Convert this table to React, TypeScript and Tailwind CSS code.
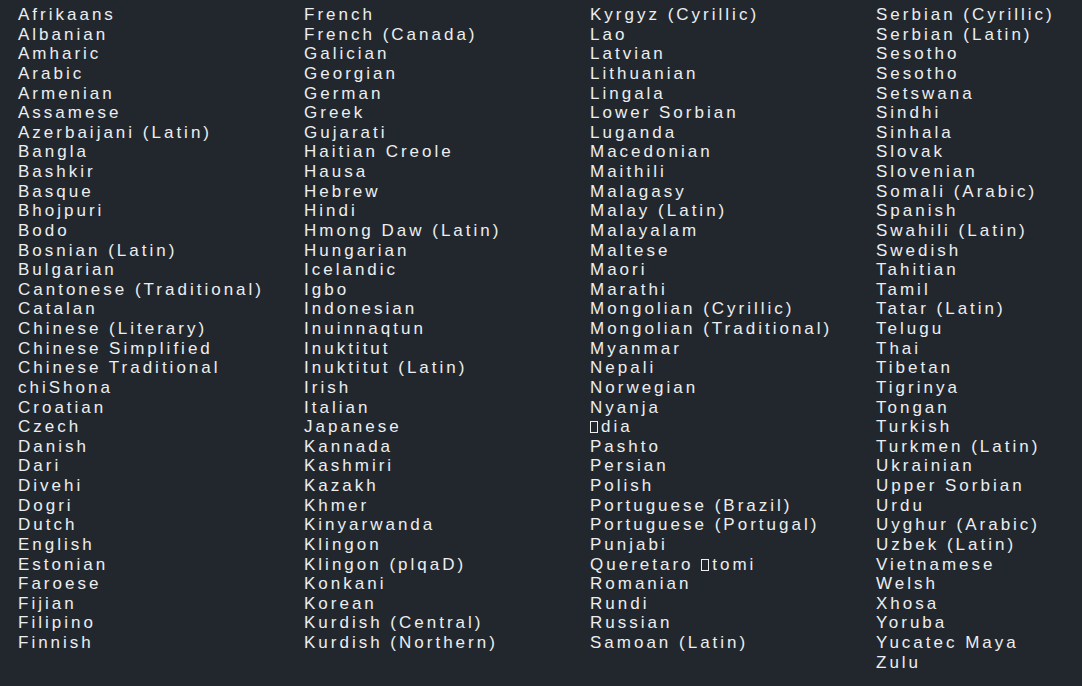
const columns: string[][] = [
  [
    'Afrikaans', 'Albanian', 'Amharic', 'Arabic', 'Armenian', 'Assamese', 'Azerbaijani (Latin)',
    'Bangla', 'Bashkir', 'Basque', 'Bhojpuri', 'Bodo', 'Bosnian (Latin)', 'Bulgarian',
    'Cantonese (Traditional)', 'Catalan', 'Chinese (Literary)', 'Chinese Simplified',
    'Chinese Traditional', 'chiShona', 'Croatian', 'Czech', 'Danish', 'Dari', 'Divehi', 'Dogri',
    'Dutch', 'English', 'Estonian', 'Faroese', 'Fijian', 'Filipino', 'Finnish',
  ],
  [
    'French', 'French (Canada)', 'Galician', 'Georgian', 'German', 'Greek', 'Gujarati',
    'Haitian Creole', 'Hausa', 'Hebrew', 'Hindi', 'Hmong Daw (Latin)', 'Hungarian', 'Icelandic',
    'Igbo', 'Indonesian', 'Inuinnaqtun', 'Inuktitut', 'Inuktitut (Latin)', 'Irish', 'Italian',
    'Japanese', 'Kannada', 'Kashmiri', 'Kazakh', 'Khmer', 'Kinyarwanda', 'Klingon',
    'Klingon (plqaD)', 'Konkani', 'Korean', 'Kurdish (Central)', 'Kurdish (Northern)',
  ],
  [
    'Kyrgyz (Cyrillic)', 'Lao', 'Latvian', 'Lithuanian', 'Lingala', 'Lower Sorbian', 'Luganda',
    'Macedonian', 'Maithili', 'Malagasy', 'Malay (Latin)', 'Malayalam', 'Maltese', 'Maori',
    'Marathi', 'Mongolian (Cyrillic)', 'Mongolian (Traditional)', 'Myanmar', 'Nepali',
    'Norwegian', 'Nyanja', '#dia', 'Pashto', 'Persian', 'Polish', 'Portuguese (Brazil)',
    'Portuguese (Portugal)', 'Punjabi', 'Queretaro #tomi', 'Romanian', 'Rundi', 'Russian',
    'Samoan (Latin)',
  ],
  [
    'Serbian (Cyrillic)', 'Serbian (Latin)', 'Sesotho', 'Sesotho', 'Setswana', 'Sindhi', 'Sinhala',
    'Slovak', 'Slovenian', 'Somali (Arabic)', 'Spanish', 'Swahili (Latin)', 'Swedish', 'Tahitian',
    'Tamil', 'Tatar (Latin)', 'Telugu', 'Thai', 'Tibetan', 'Tigrinya', 'Tongan', 'Turkish',
    'Turkmen (Latin)', 'Ukrainian', 'Upper Sorbian', 'Urdu', 'Uyghur (Arabic)', 'Uzbek (Latin)',
    'Vietnamese', 'Welsh', 'Xhosa', 'Yoruba', 'Yucatec Maya', 'Zulu',
  ],
];

// missing-glyph box, as the reference font draws it
function Tofu() {
  return <span className="inline-block w-[8px] h-[12px] border border-current align-[-1px] mr-[3px]" />;
}

function Name({ text }: { text: string }) {
  const parts = text.split('#');
  if (parts.length === 1) return <>{text}</>;
  return (
    <>
      {parts[0]}
      <Tofu />
      {parts[1]}
    </>
  );
}

export default function App() {
  return (
    <div className="w-[1082px] h-[686px] overflow-hidden bg-[#22272e] text-[#eceef0] font-['Liberation_Sans',sans-serif] text-[17px] leading-[19.625px] tracking-[3px]">
      {/* four flowed columns */}
      <div className="flex pt-[5px]">
        {columns.map((col, i) => (
          <ul key={i} className="w-[286px] shrink-0 pl-[18px] flex flex-col">
            {col.map((name, j) => (
              <li key={j} className="whitespace-nowrap">
                <Name text={name} />
              </li>
            ))}
          </ul>
        ))}
      </div>
    </div>
  );
}
